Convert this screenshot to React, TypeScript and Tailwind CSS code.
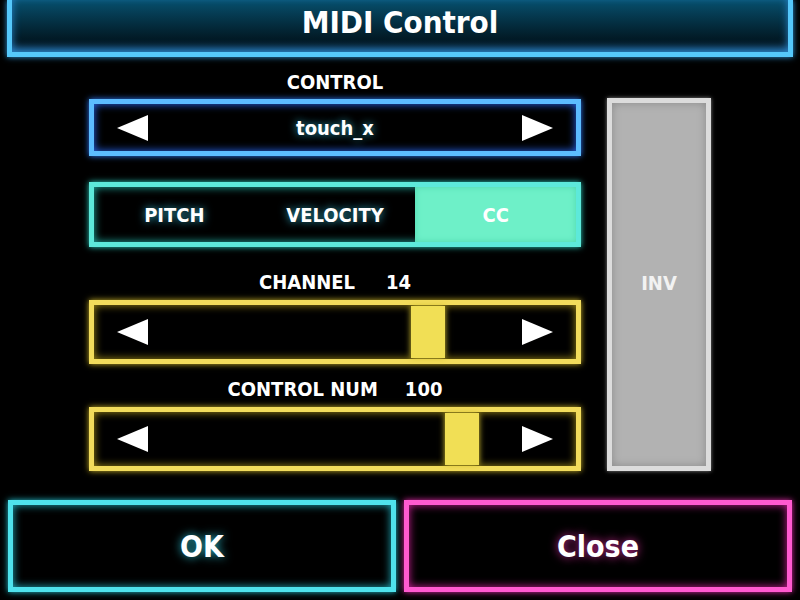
const font = { fontFamily: '"DejaVu Sans Condensed", "Liberation Sans", sans-serif' };

function Arrow({ dir }: { dir: "left" | "right" }) {
  return (
    <svg width="31" height="26" viewBox="0 0 31 26" className="shrink-0">
      {dir === "left" ? <polygon points="0,13 31,0 31,26" fill="#fff" /> : <polygon points="31,13 0,0 0,26" fill="#fff" />}
    </svg>
  );
}

function Label({ children, className }: { children: React.ReactNode; className: string }) {
  return (
    <div className={`flex h-[24px] items-center justify-center text-[20px] font-bold text-white ${className}`}>
      {children}
    </div>
  );
}

function Slider({ pos, className }: { pos: number; className: string }) {
  return (
    <div className={`relative flex h-[64px] items-center justify-between border-[5px] border-[#f2dc5c] bg-black px-[23px] shadow-[0_0_6px_#c9b227,inset_0_0_8px_#a8921a] ${className}`}>
      <Arrow dir="left" />
      <Arrow dir="right" />
      {/* thumb */}
      <div
        className="absolute top-[1px] bottom-[1px] w-[34px] bg-[#f1df55] shadow-[0_0_6px_#d8c430]"
        style={{ left: pos }}
      />
    </div>
  );
}

export default function App() {
  return (
    <div className="h-[600px] w-[800px] overflow-hidden bg-black text-white" style={font}>
      {/* header */}
      <div className="mx-[7px] flex h-[57px] items-center justify-center border-[5px] border-t-0 border-[#55c8fb] bg-gradient-to-b from-[#07506e] to-[#010a10] pb-[7px] shadow-[0_0_6px_#2f9ae0,inset_0_-4px_8px_#2a88d0]">
        <span className="text-[31px] font-bold">MIDI Control</span>
      </div>

      <div className="flex justify-center gap-[26px]">
        {/* left column */}
        <div className="flex w-[492px] flex-col">
          <Label className="mt-[13px]">CONTROL</Label>
          <div className="mt-[5px] flex h-[57px] items-center justify-between border-[5px] border-[#5cbcff] bg-black px-[23px] shadow-[0_0_6px_#2f7cff,inset_0_0_8px_#2a6cff]">
            <Arrow dir="left" />
            <span className="text-[20px] font-bold [text-shadow:0_0_8px_#2fa9c0]">touch_x</span>
            <Arrow dir="right" />
          </div>

          <div className="mt-[26px] flex h-[65px] border-[5px] border-[#5de9da] bg-black shadow-[0_0_6px_#2bcfc0,inset_0_0_8px_#22b7aa]">
            <div className="flex flex-1 items-center justify-center text-[20px] font-bold [text-shadow:0_0_8px_#2fa9c0]">PITCH</div>
            <div className="flex flex-1 items-center justify-center text-[20px] font-bold [text-shadow:0_0_8px_#2fa9c0]">VELOCITY</div>
            <div className="flex flex-1 items-center justify-center bg-[#6ef0c8] text-[20px] font-bold shadow-[inset_0_0_6px_#4fd8b0]">CC</div>
          </div>

          <Label className="mt-[23px] gap-[31px]">
            <span>CHANNEL</span>
            <span>14</span>
          </Label>
          <Slider pos={317} className="mt-[6px]" />

          <Label className="mt-[13px] gap-[27px]">
            <span>CONTROL NUM</span>
            <span>100</span>
          </Label>
          <Slider pos={351} className="mt-[6px]" />
        </div>

        {/* right column */}
        <div className="mt-[41px] flex h-[373px] w-[104px] justify-center border-[5px] border-[#dcdcdc] bg-[#b2b2b2] pt-[165px] shadow-[0_0_4px_#888,inset_0_0_8px_#8a8a8a]">
          <span className="text-[20px] font-bold text-[#f2f2f2]">INV</span>
        </div>
      </div>

      {/* bottom buttons */}
      <div className="mx-[8px] mt-[29px] flex gap-[8px]">
        <div className="flex h-[92px] flex-1 items-center justify-center border-[5px] border-[#4fe2ec] bg-black shadow-[0_0_6px_#22c0d0,inset_0_0_8px_#20b0c0]">
          <span className="text-[30px] font-bold [text-shadow:0_0_10px_#2ab8c8]">OK</span>
        </div>
        <div className="flex h-[92px] flex-1 items-center justify-center border-[5px] border-[#ff5ad0] bg-black shadow-[0_0_6px_#e02aa8,inset_0_0_8px_#d0209a]">
          <span className="text-[30px] font-bold [text-shadow:0_0_10px_#c82a90]">Close</span>
        </div>
      </div>
    </div>
  );
}
